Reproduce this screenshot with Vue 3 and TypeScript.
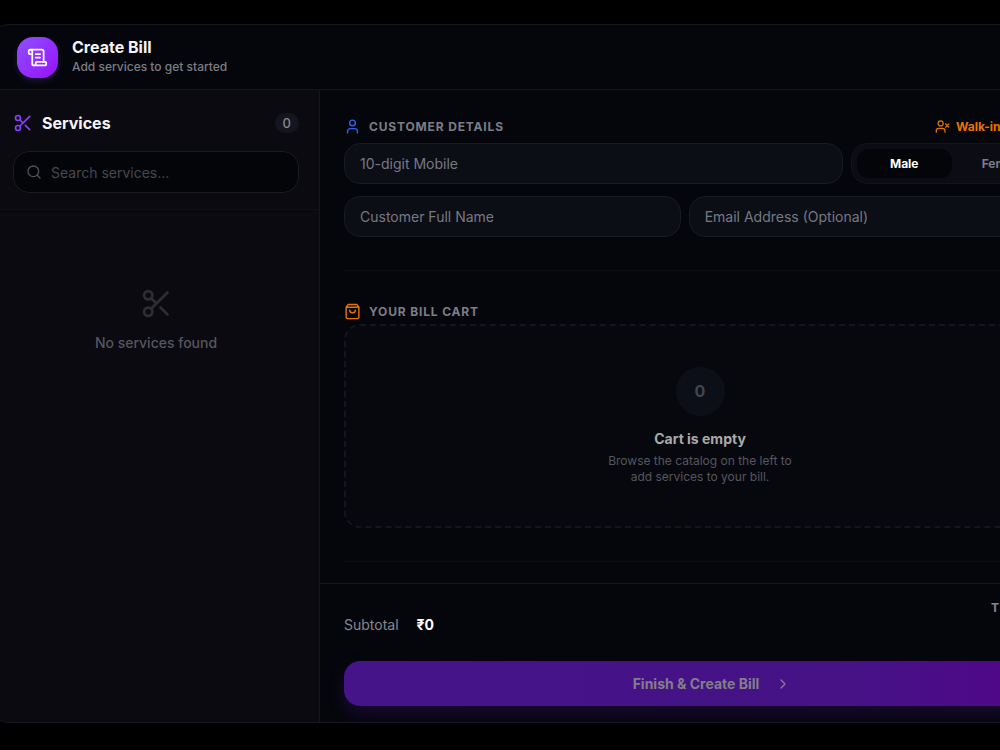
<script setup lang="ts">
import { ref } from 'vue'

type Gender = 'Male' | 'Female'

const genders: Gender[] = ['Male', 'Female']
const gender = ref<Gender>('Male')
const search = ref('')
const mobile = ref('')
const fullName = ref('')
const email = ref('')
const serviceCount = ref(0)
const cartCount = ref(0)
const subtotal = ref(0)
</script>

<template>
  <div class="page">
    <div class="dialog" role="dialog" aria-labelledby="dialog-title">
      <header class="header">
        <span class="logo">
          <svg class="icon" width="21" height="21" viewBox="0 0 24 24" aria-hidden="true">
            <path d="M15 12h-5M15 8h-5M19 17V5a2 2 0 0 0-2-2H4" />
            <path d="M8 21h12a2 2 0 0 0 2-2v-1a1 1 0 0 0-1-1H11a1 1 0 0 0-1 1v1a2 2 0 1 1-4 0V5a2 2 0 1 0-4 0v2a1 1 0 0 0 1 1h3" />
          </svg>
        </span>
        <div>
          <h1 id="dialog-title" class="title">Create Bill</h1>
          <p class="subtitle">Add services to get started</p>
        </div>
      </header>

      <div class="columns">
        <aside class="sidebar">
          <div class="sidebar-head">
            <div class="services-row">
              <svg class="icon violet" width="20" height="20" viewBox="0 0 24 24" aria-hidden="true">
                <circle cx="6" cy="6" r="3" />
                <circle cx="6" cy="18" r="3" />
                <path d="M8.12 8.12 12 12M20 4 8.12 15.88M14.8 14.8 20 20" />
              </svg>
              <h2 class="services-title">Services</h2>
              <span class="count">{{ serviceCount }}</span>
            </div>
            <label class="search">
              <svg class="icon" width="16" height="16" viewBox="0 0 24 24" aria-hidden="true">
                <circle cx="11" cy="11" r="8" />
                <path d="m21 21-4.3-4.3" />
              </svg>
              <input v-model="search" type="text" placeholder="Search services..." aria-label="Search services" />
            </label>
          </div>
          <div class="no-services">
            <svg class="icon faint" width="33" height="33" viewBox="0 0 24 24" aria-hidden="true">
              <circle cx="6" cy="6" r="3" />
              <circle cx="6" cy="18" r="3" />
              <path d="M8.12 8.12 12 12M20 4 8.12 15.88M14.8 14.8 20 20" />
            </svg>
            <p>No services found</p>
          </div>
        </aside>

        <main class="main">
          <div class="content">
            <section class="section">
              <div class="section-head">
                <svg class="icon blue" width="17" height="17" viewBox="0 0 24 24" aria-hidden="true">
                  <circle cx="12" cy="7" r="4" />
                  <path d="M19 21v-2a4 4 0 0 0-4-4H9a4 4 0 0 0-4 4v2" />
                </svg>
                <h3>Customer Details</h3>
                <button type="button" class="walk-in">
                  <svg class="icon" width="15" height="15" viewBox="0 0 24 24" aria-hidden="true">
                    <circle cx="9" cy="7" r="4" />
                    <path d="M16 21v-2a4 4 0 0 0-4-4H6a4 4 0 0 0-4 4v2M17 8l5 5M22 8l-5 5" />
                  </svg>
                  <span>Walk-in Guest</span>
                </button>
              </div>
              <div class="row">
                <input v-model="mobile" class="field grow" type="tel" placeholder="10-digit Mobile" aria-label="10-digit Mobile" />
                <div class="toggle" role="group" aria-label="Gender">
                  <button
                    v-for="option in genders"
                    :key="option"
                    type="button"
                    :class="{ active: gender === option }"
                    :aria-pressed="gender === option"
                    @click="gender = option"
                  >
                    {{ option }}
                  </button>
                </div>
              </div>
              <div class="names">
                <input v-model="fullName" class="field" type="text" placeholder="Customer Full Name" aria-label="Customer Full Name" />
                <input v-model="email" class="field" type="email" placeholder="Email Address (Optional)" aria-label="Email Address (Optional)" />
              </div>
            </section>

            <section class="section cart">
              <div class="section-head">
                <svg class="icon orange" width="17" height="17" viewBox="0 0 24 24" aria-hidden="true">
                  <path d="M6 2 3 6v14a2 2 0 0 0 2 2h14a2 2 0 0 0 2-2V6l-3-4zM3 6h18M16 10a4 4 0 0 1-8 0" />
                </svg>
                <h3>Your Bill Cart</h3>
              </div>
              <div class="cart-box">
                <span class="cart-count">{{ cartCount }}</span>
                <h4>Cart is empty</h4>
                <p>Browse the catalog on the left to add services to your bill.</p>
              </div>
            </section>
          </div>

          <footer class="footer">
            <div class="totals">
              <p class="subtotal">Subtotal <strong>₹{{ subtotal }}</strong></p>
              <p class="total">Total <strong>₹{{ subtotal }}</strong></p>
            </div>
            <button type="button" class="finish">
              <span>Finish &amp; Create Bill</span>
              <svg class="icon" width="16" height="16" viewBox="0 0 24 24" aria-hidden="true">
                <path d="m9 18 6-6-6-6" />
              </svg>
            </button>
          </footer>
        </main>
      </div>
    </div>
  </div>
</template>

<style>
body {
  margin: 0;
  background: #000;
}
</style>

<style scoped>
* {
  box-sizing: border-box;
}

.page {
  display: flex;
  min-height: 100vh;
  padding: 24px 0 27px;
  overflow: hidden;
  background: #000;
  color: #f4f4f6;
  font-family: Inter, "Liberation Sans", sans-serif;
}

h1, h2, h3, h4, p {
  margin: 0;
}

button, input {
  font-family: inherit;
}

button {
  border: 0;
  padding: 0;
  background: none;
  cursor: pointer;
}

.icon {
  flex: none;
  fill: none;
  stroke: currentColor;
  stroke-width: 2;
  stroke-linecap: round;
  stroke-linejoin: round;
}

.dialog {
  display: flex;
  flex: 1;
  flex-direction: column;
  margin: 0 -81px 0 -8px;
  overflow: hidden;
  border: 1px solid #17171f;
  border-radius: 16px;
  background: #05060b;
}

.header {
  display: flex;
  align-items: center;
  gap: 14px;
  height: 65px;
  padding: 0 24px;
  border-bottom: 1px solid #14141d;
}

.logo {
  display: grid;
  place-items: center;
  width: 41px;
  height: 41px;
  border-radius: 16px;
  background: linear-gradient(135deg, #8e51ff, #9810fa);
  box-shadow: 0 3px 6px #8e51ff30;
  color: #fff;
}

.title {
  font-size: 16px;
  font-weight: 700;
  line-height: 20px;
}

.subtitle {
  color: #7c7d86;
  font-size: 12px;
  font-weight: 500;
  line-height: 20px;
}

.columns {
  display: flex;
  flex: 1;
}

.sidebar {
  flex: none;
  width: 327px;
  border-right: 1px solid #15151e;
  background: #0a0a10;
}

.sidebar-head {
  padding: 20px 20px 16px;
  border-bottom: 1px solid #101117;
}

.services-row {
  display: flex;
  align-items: center;
  gap: 9px;
  height: 26px;
  margin-bottom: 15px;
}

.violet {
  color: #8b3dff;
}

.services-title {
  flex: 1;
  font-size: 16px;
  font-weight: 700;
}

.count {
  padding: 0 8px;
  border-radius: 10px;
  background: #15151f;
  color: #85868f;
  font-size: 13px;
  font-weight: 500;
  line-height: 20px;
}

.search {
  display: flex;
  align-items: center;
  gap: 9px;
  height: 42px;
  padding: 0 12px;
  border: 1px solid #1b1c21;
  border-radius: 16px;
  background: #040509;
  color: #50515a;
}

.search input {
  flex: 1;
  min-width: 0;
  padding: 0;
  border: 0;
  outline: 0;
  background: none;
  color: #f4f4f6;
  font-size: 14px;
}

.search input::placeholder {
  color: #46474f;
  opacity: 1;
}

.no-services {
  display: flex;
  flex-direction: column;
  align-items: center;
  gap: 13px;
  padding: 77px 0 0;
  color: #55565f;
  font-size: 14px;
  font-weight: 500;
  line-height: 20px;
}

.faint {
  color: #2d2e33;
}

.main {
  display: flex;
  flex: 1;
  flex-direction: column;
  min-width: 0;
}

.content {
  flex: 1;
  padding: 26px 24px 0;
}

.section {
  padding-bottom: 33px;
  border-bottom: 1px solid #0d0e14;
}

.cart {
  padding-top: 30px;
}

.section-head {
  display: flex;
  align-items: center;
  gap: 8px;
  height: 20px;
  margin-bottom: 7px;
}

.cart .section-head {
  margin-bottom: 3px;
}

.section-head h3 {
  flex: 1;
  color: #7c7d86;
  font-size: 12px;
  font-weight: 700;
  letter-spacing: 0.07em;
  text-transform: uppercase;
}

.blue {
  color: #2b62f0;
}

.orange {
  color: #e87400;
}

.walk-in {
  display: flex;
  align-items: center;
  gap: 6px;
  width: 121px;
  color: #e87400;
  font-size: 12px;
  font-weight: 700;
}

.row {
  display: flex;
  gap: 8px;
  margin-bottom: 12px;
}

.names {
  display: grid;
  grid-template-columns: 11fr 12fr;
  gap: 8px;
}

.field {
  min-width: 0;
  height: 41px;
  padding: 0 15px;
  border: 1px solid #1a1b20;
  border-radius: 16px;
  outline: 0;
  background: #0c0e16;
  color: #f4f4f6;
  font-size: 14px;
}

.field::placeholder {
  color: #777882;
  opacity: 1;
}

.grow {
  flex: 1;
}

.toggle {
  display: grid;
  grid-template-columns: 1fr 1fr;
  gap: 4px;
  width: 205px;
  padding: 5px;
  border: 1px solid #12131c;
  border-radius: 16px;
  background: #0b0c14;
}

.toggle button {
  border-radius: 12px;
  color: #7c7d86;
  font-size: 12px;
  font-weight: 700;
}

.toggle .active {
  background: #040509;
  color: #fff;
}

.cart-box {
  display: flex;
  flex-direction: column;
  align-items: center;
  padding: 41px 0;
  border: 2px dashed #15151e;
  border-radius: 16px;
  background: #07080d;
  text-align: center;
}

.cart-count {
  width: 49px;
  border-radius: 50%;
  background: #0c0f17;
  color: #43454d;
  font-size: 16px;
  font-weight: 700;
  line-height: 49px;
}

.cart-box h4 {
  margin: 13px 0 4px;
  color: #a9a9ac;
  font-size: 14px;
  font-weight: 700;
  line-height: 20px;
}

.cart-box p {
  width: 205px;
  color: #55565f;
  font-size: 12px;
  line-height: 16px;
}

.footer {
  padding: 15px 24px 16px;
  border-top: 1px solid #15161e;
}

.totals {
  display: flex;
  align-items: center;
  justify-content: space-between;
  margin-bottom: 11px;
}

.subtotal {
  color: #85868f;
  font-size: 14px;
}

.subtotal strong {
  margin-left: 14px;
  color: #fff;
}

.total {
  display: flex;
  flex-direction: column;
  width: 65px;
  color: #85868f;
  font-size: 12px;
  font-weight: 700;
  letter-spacing: 1px;
  line-height: 18px;
  text-transform: uppercase;
}

.total strong {
  color: #fff;
  font-size: 24px;
  letter-spacing: 0;
  line-height: 33px;
  text-align: right;
}

.finish {
  display: flex;
  align-items: center;
  justify-content: center;
  gap: 16px;
  width: 100%;
  height: 45px;
  padding-left: 24px;
  border-radius: 16px;
  background: linear-gradient(90deg, #441488 0, #461286 72%, #4e0888 92%);
  box-shadow: 0 8px 18px #7f22fe28;
  color: #827f88;
  font-size: 14px;
  font-weight: 700;
}
</style>
